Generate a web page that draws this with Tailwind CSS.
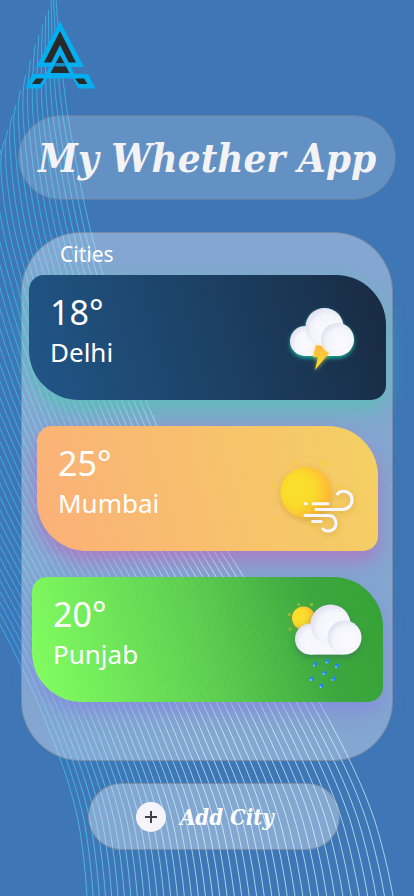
<!DOCTYPE html>
<html lang="en">
<head>
<meta charset="utf-8">
<meta name="viewport" content="width=device-width, initial-scale=1">
<title>My Whether App</title>
<script src="https://cdn.jsdelivr.net/npm/@tailwindcss/browser@4"></script>
</head>
<body class="bg-[#3e76b6] font-['Noto_Sans','Open_Sans',sans-serif] text-white">
<div class="relative isolate min-h-screen overflow-hidden pb-[46px]">
  <svg class="absolute inset-0 -z-10 h-full w-full" viewBox="0 0 414 896" preserveAspectRatio="xMidYMin slice" aria-hidden="true">
    <defs>
      <linearGradient id="lineColor" gradientUnits="userSpaceOnUse" x1="60" y1="0" x2="210" y2="0">
        <stop offset="0" stop-color="#38bff0"/><stop offset="1" stop-color="#c4f2f8"/>
      </linearGradient>
    </defs>
    <path id="waves" fill="none" stroke="url(#lineColor)" stroke-width="1" stroke-opacity=".75"/>
  </svg>

  <header class="px-[18px] pt-[21px]">
    <svg class="ml-2 h-[68px] w-[70px]" viewBox="0 0 70 68" role="img" aria-label="Logo">
      <path d="M34 0 58 46H10Z" fill="#04aeef"/>
      <path d="M34 10 50 41.500H18Z" fill="#292929"/>
      <path d="M34 24 49 54H19Z" fill="#04aeef"/>
      <path d="M34 34 43.500 52H24.500Z" fill="#292929"/>
      <path d="M29.800 42H38.200L40 45.500H28Z" fill="#168cc5"/>
      <path d="M6.500 53H62L69.500 67.500H52L47 57.500H21L15.500 67.500H-1Z" fill="#04aeef"/>
      <path d="M10 57.500H18L14 63H6ZM49 57.500H58L61.500 63H53Z" fill="#292929"/>
    </svg>
    <div class="mt-[26px] flex h-[85px] items-center justify-center rounded-full border border-gray-500/50 bg-white/20">
      <h1 class="whitespace-nowrap font-['DejaVu_Serif_Condensed','DejaVu_Serif',serif] text-[40px] font-bold italic leading-[48px] text-[#f3f3f5]">My Whether App</h1>
    </div>
  </header>

  <main>
    <section class="mx-[21px] mt-8 rounded-[60px] border border-gray-500/50 bg-white/36 pb-[58px]" aria-labelledby="cities">
      <h2 id="cities" class="pb-1.5 pl-[38px] pt-1.5 text-[21px] leading-[30px]">Cities</h2>
      <ul class="flex flex-col gap-[26px]">
        <li class="ml-[7px] mr-1.5 flex h-[125px] justify-between rounded-[15px_50px_15px_50px] bg-linear-[75deg,#215688,#1c4165_50%,#182a42] pl-[21px] shadow-[0_10px_20px_rgba(70,200,170,.6)]">
          <div class="pt-[14px]">
            <p class="text-[34px] leading-[46px]">18°</p>
            <p class="text-[26px] leading-[34px]">Delhi</p>
          </div>
          <svg class="h-full w-[120px]" viewBox="266 275 120 125" aria-hidden="true">
            <defs>
              <radialGradient id="puff" cx=".6" cy=".6" r=".65"><stop offset="0" stop-color="#fafaff"/><stop offset=".65" stop-color="#f5f5fc"/><stop offset="1" stop-color="#dedef0"/></radialGradient>
              <linearGradient id="bolt" x1="0" y1="0" x2="0" y2="1"><stop offset="0" stop-color="#fdb642"/><stop offset="1" stop-color="#fbe02a"/></linearGradient>
              <filter id="tealGlow" x="-30%" y="-30%" width="160%" height="170%"><feDropShadow dx="0" dy="2" stdDeviation="2" flood-color="#16bfa6" flood-opacity=".9"/></filter>
              <filter id="goldGlow" x="-80%" y="-50%" width="260%" height="200%"><feDropShadow dx="0" dy="1" stdDeviation="2" flood-color="#e9d53b" flood-opacity=".7"/></filter>
            </defs>
            <g fill="url(#puff)" filter="url(#tealGlow)">
              <circle cx="305" cy="341" r="15"/><path d="M305 330H339V356H305Z" fill="#f7f7fd"/>
              <circle cx="324.500" cy="327" r="19"/><circle cx="337.500" cy="339.500" r="16.500"/>
            </g>
            <path d="M316 345 322 346Q324 351 329 353L315 370 318 357H313Z" fill="url(#bolt)" filter="url(#goldGlow)"/>
          </svg>
        </li>
        <li class="ml-[15px] mr-3.5 flex h-[125px] justify-between rounded-[15px_50px_15px_50px] bg-linear-[75deg,#fbb078,#f7c26c_55%,#f4d062] pl-[21px] shadow-[0_10px_20px_rgba(190,100,190,.65)]">
          <div class="pt-[14px]">
            <p class="text-[34px] leading-[46px]">25°</p>
            <p class="text-[26px] leading-[34px]">Mumbai</p>
          </div>
          <svg class="h-full w-[120px]" viewBox="258 426 120 125" aria-hidden="true">
            <defs>
              <radialGradient id="sun" cx=".35" cy=".45" r=".7"><stop offset="0" stop-color="#fae12e"/><stop offset=".45" stop-color="#fadb2c"/><stop offset=".9" stop-color="#ffb838"/></radialGradient>
              <filter id="sunShade" x="-30%" y="-30%" width="170%" height="170%"><feDropShadow dx="0" dy="2" stdDeviation="3" flood-color="#b98b20" flood-opacity=".45"/></filter>
            </defs>
            <g fill="#f7cf3c" opacity=".7"><circle cx="324.500" cy="463.500" r="3"/><circle cx="295" cy="463" r="2"/><circle cx="273" cy="486" r="2"/><circle cx="276" cy="519" r="2"/><circle cx="337" cy="487" r="2"/><circle cx="341" cy="512" r="2"/><circle cx="312" cy="525" r="2"/></g>
            <circle cx="306" cy="492.500" r="25.500" fill="url(#sun)" filter="url(#sunShade)"/>
            <g fill="none" stroke="#f6f6fc" stroke-width="3" stroke-linecap="round" filter="url(#sunShade)">
              <path d="M305 503.700H306.500M313 503.700H328M316 509.500H342C348 509.500 352 505 352 500 352 491 342 489 337.500 494M305 515.500H329C334 515.500 336 520 336 523 336 531 327 533 323 529M312.500 521.500H321"/>
            </g>
          </svg>
        </li>
        <li class="ml-2.5 mr-[9px] flex h-[125px] justify-between rounded-[15px_50px_15px_50px] bg-linear-[75deg,#84ff62,#5bd149f0_48%,#37a733ec_80%,#35a235] pl-[21px] shadow-[0_10px_20px_rgba(132,125,225,.6)]">
          <div class="pt-[14px]">
            <p class="text-[34px] leading-[46px]">20°</p>
            <p class="text-[26px] leading-[34px]">Punjab</p>
          </div>
          <svg class="h-full w-[120px]" viewBox="263 577 120 125" aria-hidden="true">
            <defs><filter id="softShade" x="-30%" y="-30%" width="170%" height="180%"><feDropShadow dx="0" dy="3" stdDeviation="3" flood-color="#396f54" flood-opacity=".6"/></filter></defs>
            <g fill="#c8c83a" opacity=".55"><circle cx="298.500" cy="604.500" r="1.500"/><circle cx="311.500" cy="604.500" r="1.800"/><circle cx="289.500" cy="614.500" r="1.800"/><circle cx="290" cy="629" r="1.500"/></g>
            <circle cx="303.500" cy="618" r="11.500" fill="url(#sun)" filter="url(#sunShade)"/>
            <g fill="url(#puff)" filter="url(#softShade)">
              <circle cx="310.500" cy="639" r="15.500"/><path d="M310 626H344V654.500H310Z" fill="#f7f7fd"/>
              <circle cx="330.500" cy="624.500" r="20"/><circle cx="344.500" cy="637.500" r="17"/>
            </g>
            <g fill="#2187ee">
              <path id="drop" d="M316.500 661.500Q318 666 315 666.500 311.500 667 313 663.500Z"/>
              <use href="#drop" x="12.500" y="-3"/><use href="#drop" x="22" y="1.500"/><use href="#drop" x="9.500" y="8.500"/><use href="#drop" x="-3" y="14.500"/><use href="#drop" x="18.500" y="14.500"/><use href="#drop" x="6.500" y="21.500"/>
            </g>
            <g fill="#8ac8f5"><circle cx="314" cy="665.500" r="1"/><circle cx="326.500" cy="662.500" r="1"/><circle cx="336" cy="667" r="1"/><circle cx="323.500" cy="674" r="1"/><circle cx="311" cy="680" r="1"/><circle cx="332.500" cy="680" r="1"/><circle cx="320.500" cy="687" r="1"/></g>
          </svg>
        </li>
      </ul>
    </section>
    <div class="ml-[88px] mr-[74px] mt-[22px]">
      <button type="button" class="flex h-[67px] w-full items-center gap-3.5 rounded-full border border-gray-500/50 bg-white/36 pl-[47px]">
        <svg class="size-[30px] shrink-0" viewBox="0 0 30 30" aria-hidden="true"><circle cx="15" cy="15" r="15" fill="#f5f4fa"/><path d="M15 9V21M9 15H21" stroke="#3f4045" stroke-width="2"/></svg>
        <span class="whitespace-nowrap font-['DejaVu_Serif_Condensed','DejaVu_Serif',serif] text-[22px] font-bold italic leading-7">Add City</span>
      </button>
    </div>
  </main>
</div>
<script>
  // Each table lists [y, value] knots; values in between are interpolated.
  const edge = [[0,56],[50,60],[117,68],[220,88],[275,103],[350,127],[426,157],[500,196],[576,243],[640,283],[702,319],[761,350],[810,371],[850,383],[896,393],[940,399]];
  const width = [[0,105],[50,155],[100,200],[150,224],[200,240],[300,250],[426,255],[560,268],[662,277],[761,289],[896,306],[940,310]];
  const left = [[0,51],[15,45],[75,25],[155,-1],[200,-20],[220,-400],[940,-400]];
  const count = 42;
  function at(knots, y) {
    let i = 0;
    while (i < knots.length - 2 && knots[i + 1][0] < y) i++;
    const p1 = knots[i], p2 = knots[i + 1];
    const p0 = knots[i - 1] || p1, p3 = knots[i + 2] || p2;
    const h = p2[0] - p1[0], t = (y - p1[0]) / h;
    const m1 = (p2[1] - p0[1]) / (p2[0] - p0[0]) * h;
    const m2 = (p3[1] - p1[1]) / (p3[0] - p1[0]) * h;
    return (2*t*t*t - 3*t*t + 1) * p1[1] + (t*t*t - 2*t*t + t) * m1 + (3*t*t - 2*t*t*t) * p2[1] + (t*t*t - t*t) * m2;
  }
  function linear(knots, y) {
    let i = 0;
    while (i < knots.length - 2 && knots[i + 1][0] < y) i++;
    const a = knots[i], b = knots[i + 1];
    return a[1] + (b[1] - a[1]) * (y - a[0]) / (b[0] - a[0]);
  }
  let d = '';
  for (let k = 0; k <= count; k++) {
    const u = k / count;
    let open = false;
    for (let y = 0; y <= 900; y += 5) {
      const c = 0.17 * Math.max(0, Math.min(1, (y - 450) / 300));
      let x = at(edge, y) - at(width, y) * u * (1 + c * (1 - u));
      // Near the envelope the lines bend towards it and run together.
      const limit = linear(left, y), gap = x - limit;
      const soft = y < 200 ? Math.pow(y / 130, 2) * 12 : 0;
      if (gap < -soft / 2) { open = false; continue; }
      if (soft) x = limit + (gap + Math.sqrt(gap * gap + soft)) / 2;
      d += (open ? 'L' : 'M') + x.toFixed(1) + ' ' + y;
      open = true;
    }
  }
  document.getElementById('waves').setAttribute('d', d);
</script>
</body>
</html>
